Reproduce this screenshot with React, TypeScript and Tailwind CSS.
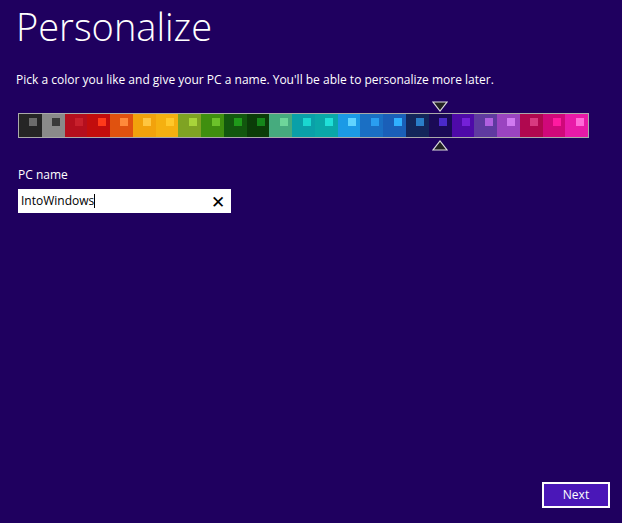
const sw: [string, string][] = [
  ["#252525", "#6b6b6b"], ["#8a8a8a", "#3a3a3a"], ["#b40f1e", "#c8202c"], ["#c20d0d", "#ff3a1a"],
  ["#e0520f", "#ff8a3a"], ["#f2a20c", "#ffc640"], ["#f5b010", "#ffc82a"], ["#7fa323", "#a8d43a"],
  ["#3f8f0f", "#6cc22a"], ["#12570e", "#1f9a1a"], ["#0b3c08", "#15851a"], ["#46ab7e", "#6ed69a"],
  ["#0aa0a8", "#1ad8d0"], ["#0aa8a8", "#20e0d8"], ["#1b9ae6", "#60d4ff"], ["#1a6fc4", "#2a9ef0"],
  ["#1a5fb8", "#30b0ff"], ["#13265a", "#2a7ec8"], ["#1a0a56", "#4a2ac8"], ["#4e0aa8", "#7420d8"],
  ["#5f3aa0", "#b060e0"], ["#9a44c0", "#d07af0"], ["#b0084f", "#d83a80"], ["#d0087a", "#ff1aa0"],
  ["#e81aa8", "#ff6ad8"],
];
export default function App() {
  return (
    <div className="w-[622px] h-[523px] bg-[#1f005f] text-white relative overflow-hidden" style={{ fontFamily: '"Open Sans","Noto Sans",sans-serif' }}>
      <div className="pl-[16px] pt-[2px]">
        <h1 className="text-[38px] font-light leading-[48px]">Personalize</h1>
        <p className="text-[12px] mt-[21px]">Pick a color you like and give your PC a name. You'll be able to personalize more later.</p>
        <div className="relative mt-[10px] ml-[2px]">
          <div className="h-[14px] w-[571px] relative">
            <svg className="absolute left-[414px] top-[2px]" width="16" height="11" viewBox="0 0 16 11"><path d="M1 1h14L8 10z" fill="#222" stroke="#ddd" strokeWidth="1.2" /></svg>
          </div>
          <div className="flex w-[571px] h-[25px] border border-[#aaa]">
            {sw.map(([b, a], i) => (
              <div key={i} className="flex-1 flex justify-center pt-[4px]" style={{ background: b }}>
                <div className="w-[8px] h-[8px] ml-[6px]" style={{ background: a }} />
              </div>
            ))}
          </div>
          <div className="h-[14px] w-[571px] relative">
            <svg className="absolute left-[414px] top-[2px]" width="16" height="11" viewBox="0 0 16 11"><path d="M1 10h14L8 1z" fill="#222" stroke="#ddd" strokeWidth="1.2" /></svg>
          </div>
        </div>
        <p className="text-[12px] mt-[14px] ml-[2px]">PC name</p>
        <div className="mt-[5px] ml-[2px] w-[213px] h-[24px] bg-white text-black flex items-center px-[3px] text-[12px]">
          <span>IntoWindows</span><span className="w-px h-[14px] bg-black" />
          <span className="ml-auto mr-[3px] text-[17px] leading-none">✕</span>
        </div>
      </div>
      <button className="absolute left-[542px] top-[482px] w-[68px] h-[26px] border-2 border-white bg-[#4a17b8] text-[12px] text-white">Next</button>
    </div>
  );
}
